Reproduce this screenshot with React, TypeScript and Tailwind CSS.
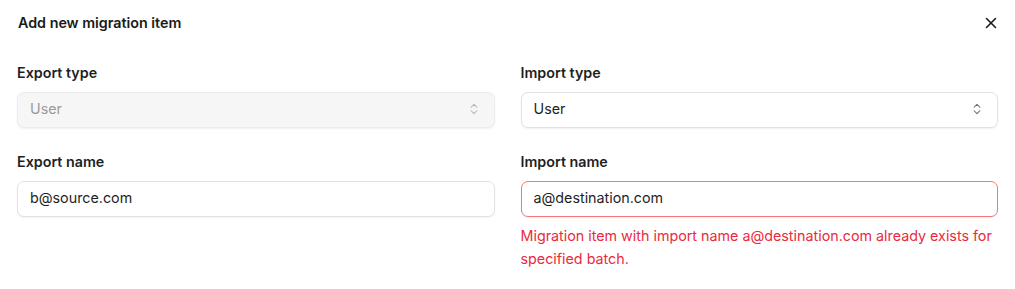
import { X, ChevronsUpDown } from "lucide-react";

function SelectBox({ value, disabled }: { value: string; disabled?: boolean }) {
  return (
    <div
      className={
        "flex h-[36px] items-center justify-between rounded-[7px] border pb-[2px] pl-3 pr-[13px] text-[14.3px] shadow-[0_1px_2px_rgba(0,0,0,0.06)] " +
        (disabled
          ? "border-[#ececec] bg-[#f6f6f6] text-[#9b9b9b]"
          : "border-[#e2e2e2] bg-white text-[#1f1f1f]")
      }
    >
      <span>{value}</span>
      <ChevronsUpDown
        size={14}
        strokeWidth={1.8}
        className={disabled ? "text-[#b5b5b5]" : "text-[#6b6b6b]"}
      />
    </div>
  );
}

function TextBox({ value, error }: { value: string; error?: boolean }) {
  return (
    <div
      className={
        "flex h-[36px] items-center rounded-[7px] border bg-white pb-[2px] pl-3 text-[14.3px] text-[#1f1f1f] shadow-[0_1px_2px_rgba(0,0,0,0.06)] " +
        (error ? "border-[#f47a7a]" : "border-[#e2e2e2]")
      }
    >
      {value}
    </div>
  );
}

function Field({ label, children }: { label: string; children: React.ReactNode }) {
  return (
    <div className="flex flex-col">
      <label className="mb-[9px] text-[14.3px] font-semibold leading-[20px] text-[#1f1f1f]">
        {label}
      </label>
      {children}
    </div>
  );
}

export default function App() {
  return (
    <div
      className="w-[1015px] bg-white pl-[17px] pr-[17px] pt-[13px]"
      style={{ fontFamily: "Inter, 'Noto Sans', sans-serif" }}
    >
      <div className="flex items-center justify-between">
        <h2 className="pl-[1px] text-[14.3px] font-semibold leading-[20px] text-[#1a1a1a]">
          Add new migration item
        </h2>
        <button className="-mr-[2px] flex h-5 w-[18px] items-center justify-center text-[#1a1a1a]">
          <X size={18} strokeWidth={2.1} />
        </button>
      </div>

      <div className="mt-[30px] grid grid-cols-2 gap-x-[26px] gap-y-[24px]">
        <Field label="Export type">
          <SelectBox value="User" disabled />
        </Field>
        <Field label="Import type">
          <SelectBox value="User" />
        </Field>
        <Field label="Export name">
          <TextBox value="b@source.com" />
        </Field>
        <Field label="Import name">
          <TextBox value="a@destination.com" error />
          <p className="mt-[7px] text-[14.3px] leading-[23px] text-[#ea2a3d]">
            Migration item with import name a@destination.com already exists for
            specified batch.
          </p>
        </Field>
      </div>
    </div>
  );
}
